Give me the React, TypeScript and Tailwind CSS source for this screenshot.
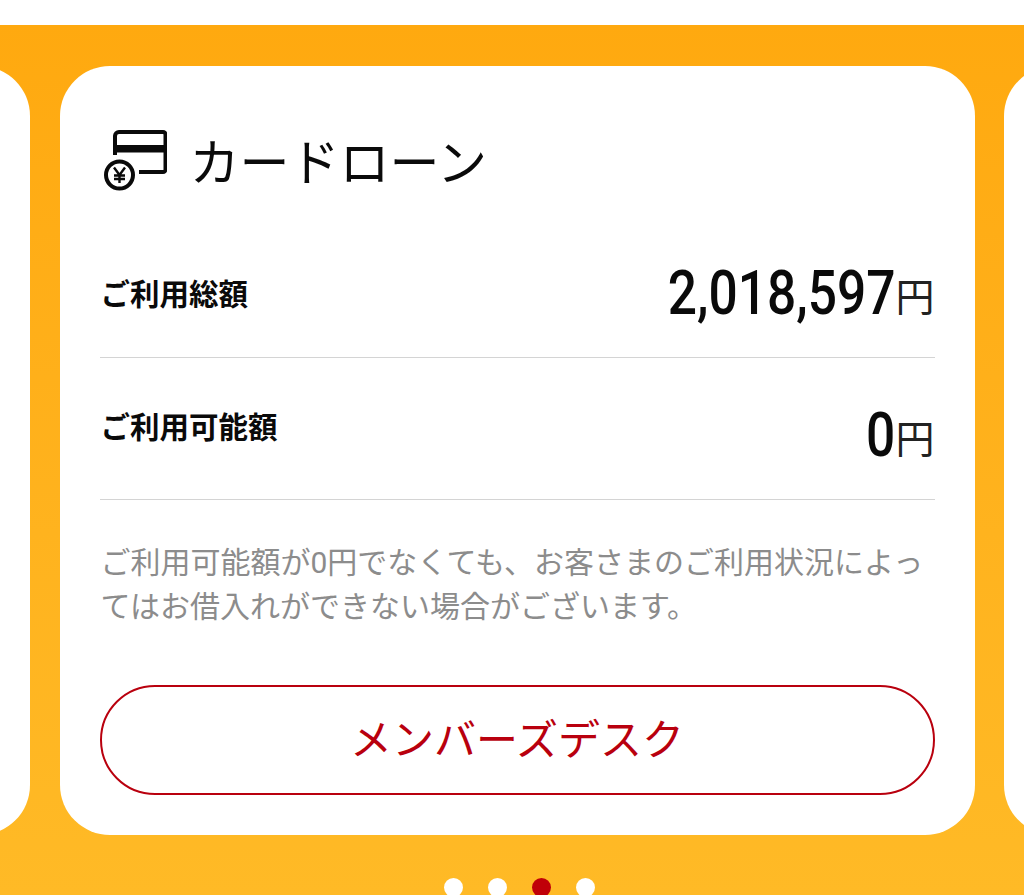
const jp = "font-['Roboto','Noto_Sans_CJK_JP',sans-serif]"

function CardLoanIcon() {
  return (
    <svg width="64" height="62" viewBox="0 0 64 62" fill="none" className="shrink-0">
      <path d="M12 25V6a4 4 0 0 1 4-4h44a2.500 2.500 0 0 1 2.500 2.500v35a2.500 2.500 0 0 1-2.500 2.500H36" stroke="#0a0a0a" strokeWidth="4" />
      <rect x="11" y="15" width="52" height="7.500" fill="#0a0a0a" />
      <circle cx="16.500" cy="45" r="13.500" stroke="#0a0a0a" strokeWidth="4" fill="#fff" />
      <path d="M11 37.500l5.500 7.500 5.500-7.500M16.500 45v8M11 45.500h11M11 49h11" stroke="#0a0a0a" strokeWidth="2.400" />
    </svg>
  )
}

function AmountRow({ label, amount, labelClass }: { label: string; amount: string; labelClass: string }) {
  return (
    <div className="flex h-[142px] items-start justify-between border-b border-[#d4d4d4]">
      <div className={`text-[29.500px] leading-[40px] font-bold text-[#0a0a0a] ${labelClass}`}>{label}</div>
      <div className="flex items-baseline pt-[41px]">
        <span className="origin-right scale-x-[0.83] font-['Roboto',sans-serif] text-[62px] leading-[72px] font-medium text-[#0a0a0a]">{amount}</span>
        <span className="-translate-y-[3px] text-[39px] leading-[72px] text-[#222]">円</span>
      </div>
    </div>
  )
}

export default function App() {
  return (
    <div className={`h-[895px] w-[1024px] overflow-hidden bg-white pt-[25px] ${jp}`}>
      <div className="h-[870px] overflow-hidden bg-gradient-to-b from-[#ffa90f] to-[#ffba26] pt-[41px]">
        <div className="-ml-[885px] flex w-max gap-[29.500px]">
          <div className="h-[769px] w-[915px] rounded-[50px] bg-white" />
          <div className="h-[769px] w-[915px] rounded-[50px] bg-white px-[40px] pt-[62px]">
            <div className="flex h-[66px] items-center gap-[23px] pl-[3px]">
              <CardLoanIcon />
              <h2 className="pt-[6px] text-[50px] leading-none font-normal text-[#0a0a0a]">カードローン</h2>
            </div>
            <div className="mt-[22px]">
              <AmountRow label="ご利用総額" amount="2,018,597" labelClass="pl-[1px] pt-[59px]" />
              <AmountRow label="ご利用可能額" amount="0" labelClass="pl-[1px] pt-[50px]" />
            </div>
            <p className="mt-[41px] pl-[1px] text-[30px] leading-[44px] text-[#8c8c8c]">
              ご利用可能額が0円でなくても、お客さまのご利用状況によってはお借入れができない場合がございます。
            </p>
            <button className="mt-[56px] flex h-[110px] w-full items-center justify-center rounded-full border-2 border-[#b9000e] text-[42px] text-[#b9000e]">
              メンバーズデスク
            </button>
          </div>
          <div className="h-[769px] w-[915px] rounded-[50px] bg-white" />
        </div>
        <div className="mt-[43px] flex justify-center gap-[25px] pl-[14px]">
          <span className="size-[19px] rounded-full bg-white" />
          <span className="size-[19px] rounded-full bg-white" />
          <span className="size-[19px] rounded-full bg-[#c00008]" />
          <span className="size-[19px] rounded-full bg-white" />
        </div>
      </div>
    </div>
  )
}
